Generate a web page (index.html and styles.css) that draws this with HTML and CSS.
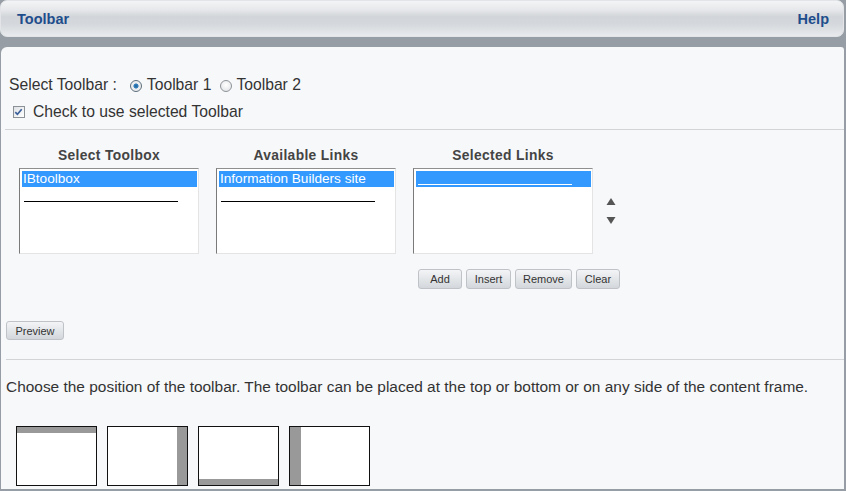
FILE: index.html
```html
<!DOCTYPE html>
<html>
<head>
<meta charset="utf-8">
<title>Toolbar</title>
<link rel="stylesheet" href="styles.css">
</head>
<body>
<div class="header">
  <span class="title">Toolbar</span>
  <span class="help">Help</span>
</div>
<div class="panel">
  <div class="row-select">
    <span class="label">Select Toolbar :</span>
    <span class="radio checked"></span><span class="rlabel">Toolbar 1</span>
    <span class="radio second"></span><span class="rlabel">Toolbar 2</span>
  </div>
  <div class="row-check">
    <span class="checkbox"><svg width="12" height="12" viewBox="0 0 12 12"><path d="M2.5 6.2 L4.8 8.6 L9.5 3" fill="none" stroke="#3a5f9a" stroke-width="1.8"/></svg></span>
    <span class="clabel">Check to use selected Toolbar</span>
  </div>
  <div class="rule rule1"></div>
  <div class="lists">
    <div class="col">
      <div class="col-title">Select Toolbox</div>
      <div class="listbox">
        <div class="opt sel">IBtoolbox</div>
        <div class="opt"><span class="blank"></span></div>
      </div>
    </div>
    <div class="col">
      <div class="col-title">Available Links</div>
      <div class="listbox">
        <div class="opt sel">Information Builders site</div>
        <div class="opt"><span class="blank"></span></div>
      </div>
    </div>
    <div class="col">
      <div class="col-title">Selected Links</div>
      <div class="listbox">
        <div class="opt sel"><span class="blank white"></span></div>
      </div>
    </div>
    <div class="arrows">
      <svg width="12" height="30" viewBox="0 0 12 30">
        <polygon points="6,1 10.5,8 1.5,8" fill="#555"/>
        <polygon points="1.5,20 10.5,20 6,27" fill="#555"/>
      </svg>
    </div>
  </div>
  <div class="btnrow">
    <button class="btn w-add">Add</button>
    <button class="btn w-insert">Insert</button>
    <button class="btn w-remove">Remove</button>
    <button class="btn w-clear">Clear</button>
  </div>
  <div class="preview-row"><button class="btn w-preview">Preview</button></div>
  <div class="rule rule2"></div>
  <p class="desc">Choose the position of the toolbar. The toolbar can be placed at the top or bottom or on any side of the content frame.</p>
  <div class="positions">
    <div class="pos pos-top"><div class="bar"></div></div>
    <div class="pos pos-right"><div class="bar"></div></div>
    <div class="pos pos-bottom"><div class="bar"></div></div>
    <div class="pos pos-left"><div class="bar"></div></div>
  </div>
</div>
</body>
</html>
```
FILE: styles.css
```css
html, body {
  margin: 0;
  padding: 0;
}
body {
  width: 846px;
  height: 491px;
  overflow: hidden;
  background: #969da4;
  font-family: "Liberation Sans", Arial, sans-serif;
  color: #333;
}
.header {
  height: 37px;
  width: 844px;
  box-sizing: border-box;
  border-radius: 7px;
  background: linear-gradient(to bottom, #f3f4f5 0%, #e6e8eb 25%, #d2d5d9 45%, #d4d7db 65%, #e8eaed 100%);
  border: 1px solid #e2e4e7;
  display: flex;
  align-items: center;
  justify-content: space-between;
  padding: 0 14px 0 16px;
  font-weight: bold;
  font-size: 14.5px;
  color: #1e4d8c;
}
.panel {
  margin: 10px 2px 0 1px;
  height: 442px;
  background: #f7f8fa;
  border-top-left-radius: 6px;
  border-top-right-radius: 3px;
  overflow: hidden;
  font-size: 15.7px;
}
.row-select {
  margin-top: 28px;
  height: 20px;
  display: flex;
  align-items: center;
  padding-left: 8px;
}
.label {
  margin-right: 13px;
  white-space: nowrap;
}
.radio {
  width: 12px;
  height: 12px;
  box-sizing: border-box;
  border-radius: 50%;
  border: 1px solid #8e9398;
  background: radial-gradient(circle at 50% 40%, #ffffff 0%, #e4e6e8 80%);
  margin-right: 5px;
  position: relative;
  top: 1px;
  flex: none;
}
.radio.checked {
  background: radial-gradient(circle, #1e5f96 0%, #3b86c4 32%, #e8eaec 40%, #f4f5f6 100%);
  border-color: #5d6d7a;
}
.radio.second {
  margin-left: 9px;
  margin-right: 4px;
}
.rlabel {
  white-space: nowrap;
}
.row-check {
  margin-top: 7px;
  height: 20px;
  display: flex;
  align-items: center;
  padding-left: 12px;
}
.checkbox {
  width: 12px;
  height: 12px;
  box-sizing: border-box;
  border: 1px solid #8c9197;
  background: linear-gradient(to bottom right, #dfe2e5, #ffffff);
  display: flex;
  margin-right: 8px;
  position: relative;
  top: 0px;
}
.checkbox svg {
  display: block;
  margin: -1px 0 0 -1px;
}
.rule {
  height: 1px;
  background: #d2d4d7;
}
.rule1 {
  margin: 7px 0 0 4px;
}
.lists {
  display: flex;
  gap: 17px;
  padding-left: 18px;
  margin-top: 18px;
}
.col {
  width: 180px;
}
.col-title {
  text-align: center;
  font-weight: bold;
  font-size: 13.8px;
  letter-spacing: 0.35px;
  line-height: 16px;
  color: #444;
  margin-bottom: 4px;
}
.listbox {
  height: 86px;
  box-sizing: border-box;
  background: #fff;
  border-top: 1px solid #8f8f8f;
  border-left: 1px solid #7a7a7a;
  border-right: 1px solid #e4e4e4;
  border-bottom: 1px solid #e4e4e4;
  padding: 2px 1px 0 2px;
}
.opt {
  height: 16px;
  font-size: 13.6px;
  line-height: 16px;
  padding-left: 1px;
  white-space: nowrap;
  color: #000;
  position: relative;
}
.opt.sel {
  background: #3399ff;
  color: #fff;
}
.blank {
  display: block;
  width: 154px;
  height: 14px;
  margin-left: 1px;
  border-bottom: 1px solid #000;
}
.blank.white {
  border-bottom-color: #fff;
  height: 13px;
}
.arrows {
  margin-left: -5px;
  padding-top: 49px;
}
.arrows svg {
  display: block;
}
.btnrow {
  display: flex;
  gap: 4px;
  margin: 15px 0 0 417px;
}
.btn {
  height: 20px;
  box-sizing: border-box;
  padding: 0;
  margin: 0;
  border: 1px solid #bfc3c8;
  border-radius: 3px;
  background: linear-gradient(to bottom, #f3f4f6 0%, #e3e6e9 50%, #d3d7db 100%);
  font-family: "Liberation Sans", Arial, sans-serif;
  font-size: 11px;
  color: #333;
  text-align: center;
}
.w-add { width: 44px; }
.w-insert { width: 45px; }
.w-remove { width: 57px; }
.w-clear { width: 44px; }
.preview-row {
  margin: 32px 0 0 5px;
}
.w-preview {
  width: 58px;
  height: 19px;
  display: block;
}
.rule2 {
  margin: 19px 0 0 5px;
}
.desc {
  margin: 17px 0 0 0;
  padding-left: 5px;
  line-height: 20px;
  white-space: nowrap;
  font-size: 15.45px;
}
.positions {
  display: flex;
  gap: 10px;
  margin-top: 29px;
  padding-left: 15px;
}
.pos {
  width: 81px;
  height: 60px;
  box-sizing: border-box;
  border: 1px solid #111;
  background: #fff;
  display: flex;
}
.pos .bar {
  background: #999;
}
.pos-top { flex-direction: column; }
.pos-top .bar { height: 6px; }
.pos-right { justify-content: flex-end; }
.pos-right .bar { width: 10px; }
.pos-bottom { flex-direction: column; justify-content: flex-end; }
.pos-bottom .bar { height: 6px; }
.pos-left .bar { width: 11px; }
```
